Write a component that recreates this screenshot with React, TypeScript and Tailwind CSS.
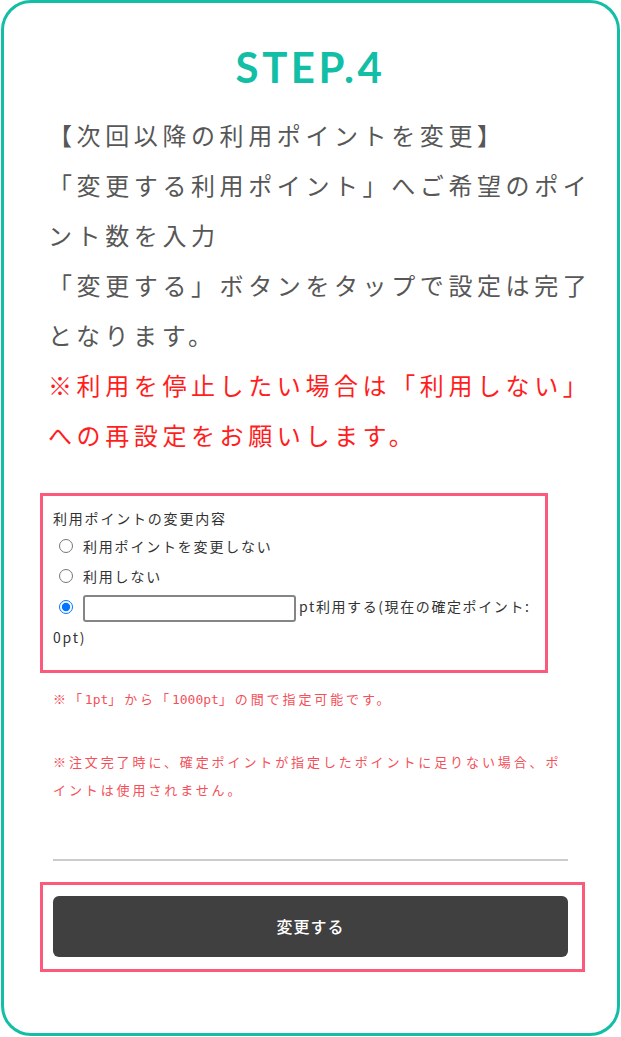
import React from "react";

const jp = "font-['Noto_Sans_CJK_JP','Noto_Sans',sans-serif]";

export default function App() {
  return (
    <div className="w-[621px] h-[1037px] bg-white">
      <div className="ml-[1px] w-[619px] h-[1036px] rounded-[30px] border-[3px] border-[#12bfa6] pt-[43px] pl-[44px]">
        <h2 className="text-center pr-[44px] font-['Lato',sans-serif] text-[42px] leading-[42px] font-bold tracking-[3.5px] text-[#12bfa6]">
          STEP.4
        </h2>

        {/* description */}
        <div className={`${jp} mt-[22px] w-[552px] text-[24px] leading-[50px] tracking-[4.6px] text-[#575757]`}>
          <p>【次回以降の利用ポイントを変更】</p>
          <p>「変更する利用ポイント」へご希望のポイント数を入力</p>
          <p>「変更する」ボタンをタップで設定は完了となります。</p>
          <p className="text-[#ff1e1e]">
            ※利用を停止したい場合は「利用しない」への再設定をお願いします。
          </p>
        </div>

        {/* form */}
        <div className={`${jp} -ml-[8px] mt-[33px] w-[508px] border-[3px] border-[#fb5a7b] pt-[10px] pb-[18px] pl-[10px] pr-[2px] text-[14px] tracking-[1.8px] text-[#333]`}>
          <p className="leading-[25px]">利用ポイントの変更内容</p>
          <label className="flex items-center h-[30px]">
            <input type="radio" name="pt" className="ml-[6px] mr-[10px] w-[14px] h-[14px]" />
            利用ポイントを変更しない
          </label>
          <label className="flex items-center h-[30px]">
            <input type="radio" name="pt" className="ml-[6px] mr-[10px] w-[14px] h-[14px]" />
            利用しない
          </label>
          <div className="leading-[30px]">
            <input
              type="radio"
              name="pt"
              defaultChecked
              className="ml-[6px] mr-[10px] w-[14px] h-[14px] align-[-2px] accent-[#0075ff]"
            />
            <input
              type="text"
              className="w-[213px] h-[27px] align-middle rounded-[3px] border-2 border-[#858585] bg-white"
            />
            <span className="ml-[3px] tracking-[1.6px]">pt利用する(現在の確定ポイント:</span>
            <br />
            0pt)
          </div>
        </div>

        {/* notes */}
        <div className={`${jp} mt-[12px] ml-[5px] w-[515px] text-[13px] leading-[28px] tracking-[2.9px] text-[#f4505a]`}>
          <p>
            ※「<span className="font-['DejaVu_Sans_Mono',monospace] tracking-normal">1pt</span>」から「
            <span className="font-['DejaVu_Sans_Mono',monospace] tracking-normal">1000pt</span>」の間で指定可能です。
          </p>
          <p className="mt-[34px]">
            ※注文完了時に、確定ポイントが指定したポイントに足りない場合、ポイントは使用されません。
          </p>
        </div>

        <div className="mt-[55px] ml-[5px] w-[515px] h-[2px] bg-[#cccccc]" />

        {/* submit */}
        <div className="-ml-[8px] mt-[21px] w-[545px] border-[3px] border-[#fb5a7b] pt-[11px] pb-[12px] pl-[10px]">
          <button className={`${jp} w-[515px] h-[61px] rounded-[6px] bg-[#404040] text-[16px] font-medium tracking-[1px] text-white`}>
            変更する
          </button>
        </div>
      </div>
    </div>
  );
}
